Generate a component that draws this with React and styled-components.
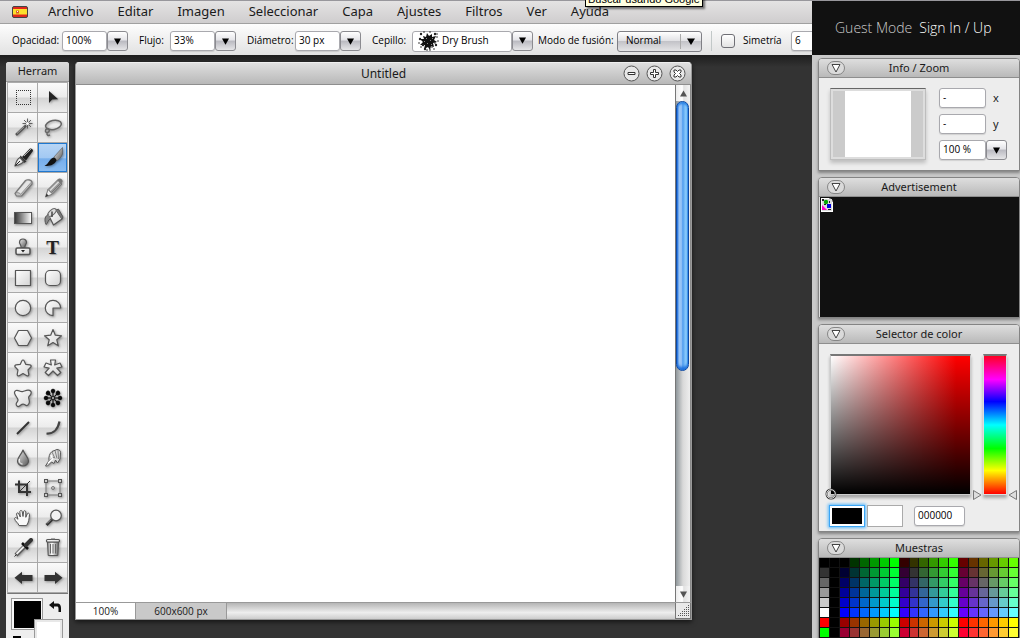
import React, { useState } from 'react';
import styled, { createGlobalStyle } from 'styled-components';

const GlobalStyle = createGlobalStyle`
    * { box-sizing: border-box; }
    body {
        margin: 0;
        background: #333;
        color: #1a1a1a;
        font-family: 'Noto Sans', 'Open Sans', sans-serif;
        font-size: 13px;
        overflow: hidden;
    }
    button, input, select { font: inherit; color: inherit; }
`

const AppStyle = styled.div`
    display: flex;
    height: 100vh;
`
const Main = styled.div`
    flex: 1;
    min-width: 0;
    display: flex;
    flex-direction: column;
`
const MenuBar = styled.nav`
    display: flex;
    align-items: center;
    flex: none;
    height: 24px;
    padding-left: 12px;
    gap: 24px;
    border-top: 1px solid #98979c;
    border-bottom: 1px solid #a0a0a0;
    background: linear-gradient(#e4e3e3, #cfcdce);
    svg { margin-right: -4px; }
`
const MenuItem = styled.a`
    padding-bottom: 2px;
    color: #1a1a1a;
    text-decoration: none;
    white-space: nowrap;
    line-height: 20px;
`
const Tooltip = styled.div`
    position: absolute;
    top: -11px;
    left: 585px;
    height: 18px;
    padding: 0 2px;
    border: 1px solid #000;
    background: #ffffe1;
    box-shadow: 2px 2px 2px rgba(0,0,0,.5);
    font: 11px/18px 'Liberation Sans', sans-serif;
    color: #000;
    white-space: nowrap;
    z-index: 2;
`
const OptionsBar = styled.div`
    display: flex;
    align-items: center;
    flex: none;
    height: 31px;
    padding: 3px 0 0 12px;
    overflow: hidden;
    background: linear-gradient(#fdfdfd, #e2e2e2);
    font-family: 'Open Sans', sans-serif;
    font-size: 10px;
    color: #000;
`
const OptionLabel = styled.label`
    flex: none;
    width: ${p => p.$w}px;
    line-height: 16px;
    margin-bottom: 3px;
    white-space: nowrap;
`
const Combo = styled.div`
    display: flex;
    flex: none;
    margin-right: ${p => p.$gap || 0}px;
`
const TextBox = styled.input`
    flex: none;
    width: ${p => p.$w || 45}px;
    height: 20px;
    padding: 0 3px 2px;
    border: 1px solid #a9a9ae;
    border-radius: 3px;
    background: #fff;
    font-family: 'Open Sans', sans-serif;
    font-size: 10px;
    color: #000;
    box-shadow: 0 1px 1px rgba(0,0,0,.12);
    outline: none;
`
const BrushBox = styled.div`
    display: flex;
    align-items: center;
    width: 100px;
    height: 21px;
    padding-left: 5px;
    gap: 3px;
    border: 1px solid #a9a9ae;
    border-radius: 3px;
    background: #fff;
    input {
        width: 62px;
        padding: 0 0 2px;
        border: 0;
        outline: none;
        background: none;
    }
`
const DropButton = styled.button`
    display: flex;
    align-items: center;
    justify-content: center;
    flex: none;
    width: 21px;
    height: 20px;
    padding: 0;
    border: 1px solid #8b8b90;
    border-radius: 3px;
    background: linear-gradient(#fff 0, #e4e4e8 45%, #b9b9c0 50%, #e6e6e8 100%);
`
const SelectWrap = styled.div`
    position: relative;
    flex: none;
    width: 85px;
    height: 21px;
    select {
        appearance: none;
        width: 100%;
        height: 100%;
        padding: 0 8px 2px;
        border: 1px solid #7f7f85;
        border-radius: 3px;
        background: linear-gradient(#fff 0, #e2e2e5 45%, #c3c3c8 50%, #e4e4e6 100%);
    }
    svg {
        position: absolute;
        top: 3px;
        right: 4px;
        pointer-events: none;
    }
`
const Separator = styled.div`
    flex: none;
    width: 1px;
    height: 20px;
    margin: 0 9px;
    background: #c2c8c8;
`
const CheckBox = styled.input`
    appearance: none;
    flex: none;
    width: 14px;
    height: 14px;
    margin: 0 8px 0 0;
    border: 1px solid #6f6f75;
    border-radius: 3px;
    background: linear-gradient(#fff, #e3e3e3);
    &:checked { background: #6fa8ec; }
`
const Workspace = styled.main`
    display: flex;
    flex: 1;
    min-height: 0;
    padding: 7px 0 0 6px;
    gap: 6px;
    background: linear-gradient(#1d1d1d, #333 12px);
`

// 工具箱
const Toolbox = styled.section`
    flex: none;
    width: 63px;
    border-radius: 3px 3px 0 0;
    background: #eee;
    overflow: hidden;
    h2 {
        margin: 0;
        height: 20px;
        border-bottom: 1px solid #999;
        background: linear-gradient(#dcdcdc, #bdbdbd);
        font-size: 11px;
        font-weight: 400;
        line-height: 18px;
        text-align: center;
    }
`
const ToolGrid = styled.div`
    display: grid;
    grid-template-columns: 30px 30px;
    margin: 0 1px;
    border-top: 1px solid #aaa;
    border-left: 1px solid #aaa;
    border-bottom: 1px solid #777;
`
const ToolButton = styled.button`
    display: flex;
    align-items: center;
    justify-content: center;
    height: 30px;
    padding: 0;
    border: 0;
    border-right: 1px solid #a9a9a9;
    border-bottom: 1px solid #a9a9a9;
    background: ${p => p.$active
        ? 'linear-gradient(#b9d6f5 0, #a3c9f3 50%, #77aeeb 55%, #8bbcf0 100%)'
        : 'linear-gradient(#fafafa 0, #ececec 48%, #d4d4d4 52%, #ededed 100%)'};
    box-shadow: ${p => p.$active ? '0 0 0 1px #1f78d0 inset' : 'none'};
    svg {
        display: block;
        filter: ${p => p.$flat ? 'none' : 'drop-shadow(1px 1px 1px rgba(0,0,0,.35))'};
    }
`
const TypeGlyph = styled.span`
    font: bold 19px/28px 'Liberation Serif', serif;
    color: #222;
    text-shadow: 1px 1px 1px rgba(0,0,0,.3);
`
const ToolColors = styled.div`
    display: grid;
    grid-template-columns: 32px 19px;
    padding: 4px 5px;
`
const FrontColor = styled.button`
    width: 32px;
    height: 32px;
    padding: 0;
    border: 2px solid #f8f8f8;
    border-left-width: 3px;
    border-top-width: 3px;
    outline: 1px solid #999;
    outline-offset: -1px;
    background: #000;
    display: flex;
    align-items: flex-end;
    justify-content: flex-end;
`
const BackColor = styled.div`
    width: 27px;
    height: 28px;
    margin-left: -8px;
    border: 2px solid #e8e8e8;
    outline: 1px solid #999;
    background: #fff;
`
const ColorSide = styled.div`
    svg { display: block; margin: 3px 0 7px 6px; }
`
const TinyReset = styled.div`
    width: 8px;
    height: 6px;
    margin: 6px 0 0 2px;
    background: #000;
`

// 文件視窗
const DocWindow = styled.section`
    display: flex;
    flex-direction: column;
    flex: none;
    width: 617px;
    margin-bottom: 18px;
    border: 1px solid #999;
    border-top-color: #eee;
    border-radius: 4px 4px 0 0;
    background: #fff;
    box-shadow: 0 2px 5px rgba(0,0,0,.6);
`
const TitleBar = styled.header`
    display: grid;
    grid-template-columns: 1fr auto 1fr;
    align-items: center;
    flex: none;
    height: 22px;
    padding: 0 5px;
    border-bottom: 1px solid #8e8e8e;
    border-radius: 3px 3px 0 0;
    background: linear-gradient(#dfdfdf, #b8b8b8);
    h1 {
        grid-column: 2;
        margin: 0;
        font-size: 12px;
        font-weight: 400;
        line-height: 20px;
    }
    div {
        display: flex;
        justify-content: flex-end;
        gap: 6px;
    }
`
const RoundButton = styled.button`
    width: 17px;
    height: 17px;
    padding: 0;
    border: 0;
    background: none;
    svg { display: block; }
`
const DocBody = styled.div`
    display: flex;
    flex: 1;
    min-height: 0;
`
const Paper = styled.div`
    flex: 1;
    background: #fff;
`
const ScrollBar = styled.div`
    display: flex;
    flex-direction: column;
    width: 16px;
    border-left: 1px solid #777;
    border-right: 1px solid #888;
    background: linear-gradient(90deg, #8f979b, #d9d9d9 50%, #eee);
`
const ScrollArrow = styled.button`
    display: flex;
    align-items: center;
    justify-content: center;
    flex: none;
    height: 16px;
    padding: 0;
    border: 0;
    background: linear-gradient(90deg, #ececec, #fff 45%, #e2e2e2 55%, #f3f3f3);
`
const ScrollTrack = styled.div`
    flex: 1;
    min-height: 0;
`
const ScrollThumb = styled.div`
    width: 13px;
    height: 270px;
    max-height: 100%;
    border: 1px solid #0b49a6;
    border-radius: 7px;
    background: linear-gradient(90deg, #1b63d8 0, #a4cdf8 18%, #8bbcf5 45%, #4d9bef 52%, #9bd8ff 85%, #4aa2ef 100%);
    box-shadow: 0 2px 2px #2f86e6 inset, 0 -3px 3px #1c6fdc inset;
`
const StatusBar = styled.footer`
    display: flex;
    flex: none;
    height: 17px;
    border-top: 1px solid #999;
    background: linear-gradient(#b5b5b5, #eee 60%, #ccc);
    font-family: 'Open Sans', sans-serif;
    font-size: 10px;
    line-height: 17px;
    text-align: center;
`
const StatusCell = styled.div`
    width: ${p => p.$w}px;
    border-right: 1px solid #999;
    background: ${p => p.$plain ? '#fff' : '#c9c9c9'};
`
const Grip = styled.div`
    margin-left: auto;
    width: 16px;
    border: 1px solid #777;
    border-top: 0;
    background: #e9e9e9;
    svg { display: block; }
`

// 右側面板
const Sidebar = styled.aside`
    display: flex;
    flex-direction: column;
    flex: none;
    width: 208px;
    background: #c9c9c9;
`
const Account = styled.div`
    display: flex;
    align-items: center;
    flex: none;
    height: 55px;
    padding: 0 0 2px 23px;
    gap: 7px;
    border-top: 1px solid #98979c;
    background: #111;
    color: #ccc;
    font-family: 'Open Sans', sans-serif;
    font-size: 14px;
    font-weight: 300;
    white-space: nowrap;
    a { color: #fff; text-decoration: none; }
`
const Panels = styled.div`
    display: flex;
    flex-direction: column;
    flex: 1;
    min-height: 0;
    gap: 6px;
    padding: 3px 0 0 6px;
    overflow: hidden;
`
const PanelStyle = styled.section`
    flex: none;
    border: 1px solid #848484;
    border-radius: 4px 4px 0 0;
    background: #ededed;
    box-shadow: 0 2px 3px rgba(0,0,0,.35);
`
const PanelHead = styled.header`
    display: grid;
    grid-template-columns: 1fr auto 1fr;
    align-items: center;
    height: 19px;
    padding: 0 8px;
    border-bottom: 1px solid #8e8e8e;
    border-radius: 3px 3px 0 0;
    background: linear-gradient(#dedede, #b9b9b9);
    h2 {
        margin: 0;
        font-size: 11px;
        font-weight: 400;
        line-height: 18px;
    }
`
const Collapse = styled.button`
    width: 18px;
    height: 14px;
    padding: 0;
    border: 1px solid #858585;
    border-radius: 7px;
    background: #dadada;
    display: flex;
    align-items: center;
    justify-content: center;
`
const InfoBody = styled.div`
    display: flex;
    gap: 13px;
    padding: 10px 0 10px 11px;
`
const Thumb = styled.div`
    width: 96px;
    height: 72px;
    padding: 2px;
    border: 1px solid #bdbdbd;
    border-top-color: #666;
    background: #ddd;
    box-shadow: 0 3px 4px rgba(0,0,0,.2);
    div {
        height: 100%;
        border: solid #cbcbcb;
        border-width: 0 12px;
        background: #fff;
    }
`
const InfoFields = styled.div`
    display: flex;
    flex-direction: column;
    gap: 6px;
    font-size: 11px;
    div { display: flex; align-items: center; }
    label { padding-left: 7px; line-height: 16px; }
`
const AdBody = styled.div`
    height: 120px;
    padding: 1px;
    border-left: 1px solid #ddd;
    background: #111;
`
const PickerBody = styled.div`
    padding: 10px 0 5px 11px;
`
const PickerRow = styled.div`
    display: flex;
    align-items: flex-start;
    gap: 12px;
`
const Shade = styled.div`
    position: relative;
    width: 141px;
    height: 141px;
    border: 1px solid #ccc;
    border-top: 2px solid #777;
    background: linear-gradient(transparent, #000), linear-gradient(90deg, #fff, #f00 90%);
    box-shadow: 0 3px 3px rgba(0,0,0,.3);
    svg { position: absolute; left: -6px; bottom: -6px; }
`
const Hue = styled.div`
    position: relative;
    width: 24px;
    height: 141px;
    border: 1px solid #ddd;
    border-top: 2px solid #777;
    background: linear-gradient(#f02 0, #f0f 17%, #00f 33%, #0ff 50%, #0f0 67%, #ff0 83%, #f00 100%);
    box-shadow: 0 3px 3px rgba(0,0,0,.3);
    input {
        display: block;
        width: 100%;
        height: 100%;
        margin: 0;
        opacity: 0;
        writing-mode: vertical-lr;
    }
    svg { position: absolute; left: -12px; bottom: -6px; pointer-events: none; }
`
const ChipRow = styled.div`
    display: flex;
    align-items: center;
    gap: 4px;
    margin-top: 11px;
    input { margin-left: 8px; }
`
const Chip = styled.button`
    width: 34px;
    height: 20px;
    padding: 0;
    border: 2px solid #fff;
    outline: 1px solid ${p => p.$on ? '#3aa5f5' : '#aaa'};
    box-shadow: ${p => p.$on ? '0 0 3px 2px #5bb8fa' : 'none'};
    background: ${p => p.$color};
`
const SwatchGrid = styled.div`
    display: grid;
    grid-template-columns: repeat(20, 1fr);
    grid-auto-rows: 9px;
    gap: 1px;
    padding: 0 1px 1px;
    background: #111;
`
const Swatch = styled.button`
    min-width: 0;
    padding: 0;
    border: 0;
    background: ${p => p.$color};
`

const Triangle = ({ w = 7, h = 7, up }) => (
    <svg width={w} height={h} viewBox="0 0 7 7">
        <path d={up ? 'M0 6.5 3.5 .5 7 6.5z' : 'M0 .5h7L3.5 6.8z'} fill={up === undefined ? '#000' : '#555'} />
    </svg>
)

const s = { fill: 'url(#metal)', stroke: '#555', strokeWidth: 1.2, strokeLinejoin: 'round' }

// 每格工具圖示 (29x29)
const toolIcons = [
    ['Marco', <g fill="none" stroke="#333" strokeDasharray="1 1">
        <path d="M8 7.500h15M8 21.500h15M8.500 7v15M22.500 7v15" />
    </g>],
    ['Mover', <path d="M11 8v12l3.2-3.4 6-.3z" fill="#222" />],
    ['Varita', <g fill="none" stroke="#555">
        <path d="M8 22 18 12.500" stroke="#555" strokeWidth="2.600" />
        <path d="M9 20.500 17 12.800" stroke="#bbb" strokeWidth=".8" />
        <path d="M19.500 5.500v10M14.500 10.500h10M16 7l7 7M23 7l-7 7" strokeWidth=".9" />
        <circle cx="19.500" cy="10.500" r="1.500" fill="#fff" stroke="none" />
    </g>],
    ['Lazo', <g fill="none" stroke="#666" strokeWidth="1.500">
        <ellipse cx="15.500" cy="12" rx="8" ry="4.500" transform="rotate(-12 15.5 12)" />
        <path d="M9.500 15.500c-3 1-2.500 4.500 0 4s2.500-4-.5-4M9 19.500c-.5 2.500 1 3.500 3 2.500" />
    </g>],
    ['Pluma', <g>
        <path d="M14 14 22 5.500c1.500-.5 3 .7 3 2.500L18 17.500z" fill="#222" />
        <path d="m16 13 7-7" stroke="#aaa" />
        <path d="m12.500 12.500 6 6-2.500 1.500-4.500-5z" fill="#333" />
        <path d="M7 23c1-4 2-7 5-8.500l3.500 4C14 21 11 22 7 23z" {...s} />
        <path d="m7.500 22.500 4.500-4.500" stroke="#222" />
    </g>],
    ['Pincel', <g>
        <path d="M16 14 24.500 4.500v6.500c-1 3-3.500 5.500-6 7z" fill="url(#dark)" stroke="#555" strokeWidth=".6" />
        <path d="M15.500 14.500c2 .5 3 1.500 3 3-2 4.500-7 6-12 5.200 4-1 4.500-6.700 9-8.200z" fill="#111" />
    </g>],
    ['Borrador', <g>
        <path d="M7 20.500 17.500 7.500c2-1.500 6-.5 6.500 1.500v2L13.500 23H8.500z" {...s} fill="#c4c4c4" stroke="#777" />
        <path d="M9 19.500 18.500 8.500c1.500-.8 3.500-.3 4.500.8L13 20.500c-1-1.200-2.500-1.500-4-1z" fill="#e4e4e4" />
        <path d="M7.500 20.500c1-1.500 4-1 5 1L23.500 9" fill="none" stroke="#888" strokeWidth=".8" />
    </g>],
    ['Lápiz', <g>
        <path d="m10 16.500 9.500-9.500 4.500 4-9.500 10z" fill="#999" stroke="#777" />
        <path d="m12 17.500 9-9" stroke="#ddd" strokeWidth="1.500" /><path d="M13.500 19.500l9-9" stroke="#777" />
        <path d="m19 7 2-1.500c2-.5 4 1.500 3.500 3L23 11z" fill="#777" />
        <path d="m10 16.500 4.500 4.500L7.500 24z" fill="#eee" stroke="#777" /><path d="m8.500 20.500 2 2-3 1.500z" fill="#333" />
    </g>],
    ['Degradado', <rect x="6.500" y="9.500" width="17" height="11" fill="url(#grad)" stroke="#555" />],
    ['Bote', <g>
        <path d="M11 13 18 7l6 9-8.500 6z" {...s} />
        <path d="m18 7 2.500-.8L25 14l-1 2" fill="#777" stroke="#555" />
        <ellipse cx="14" cy="9.500" rx="5" ry="2.500" fill="#ddd" stroke="#666" transform="rotate(-42 14 9.5)" />
        <path d="M14 8.500v5.500" stroke="#444" strokeWidth="1.500" />
        <path d="M10.500 11.500C7 13 6 16 8 21.500c2-.5 1.500-4.500 4.500-6" fill="#888" stroke="#555" />
    </g>],
    ['Tampón', <g>
        <path d="M13 14.500c.8-2-1.500-3.300-1.500-5a3.500 3.500 0 0 1 7 0c0 1.700-2.300 3-1.500 5z" {...s} fill="url(#dark)" />
        <rect x="8" y="15" width="14" height="6.500" rx="1.500" {...s} strokeWidth="1.600" />
        <path d="M13 17h4l-2 2.500z" fill="#222" />
    </g>],
    ['Texto', null],
    ['Rectángulo', <rect x="7.500" y="7.500" width="15" height="15" {...s} />],
    ['Redondeado', <rect x="7.500" y="7.500" width="15" height="15" rx="4.500" {...s} />],
    ['Elipse', <circle cx="15" cy="15" r="7.700" {...s} />],
    ['Sector', <path d="M15 15h7.700A7.700 7.700 0 1 0 15 22.700z" {...s} />],
    ['Polígono', <path d="m10.500 7.500h9L23.500 15l-4 7.500h-9L6.500 15z" {...s} />],
    ['Estrella', <path d="m15 6.500 2.300 5.700 6.200.6-4.700 4 1.500 6-5.300-3.300L9.700 22.800l1.500-6-4.700-4 6.200-.6z" {...s} />],
    ['Estrella redonda', <path d="M13.800 8c.6-1.300 1.800-1.300 2.400 0l1.500 3.300 4.200.5c1.300.3 1.700 1.500.7 2.400L20 17l.8 4.300c.1 1.300-.9 2-2 1.400L15 20.500l-3.800 2.200c-1.100.6-2.100-.1-2-1.400L10 17l-2.600-2.800c-1-.9-.6-2.100.7-2.400l4.200-.5z" {...s} />],
    ['Asterisco', <path d="M12.500 7h5l-.8 5 5.300-2 2 4-5.200 1.200 4 4.300-3.300 3L15 18l-4.500 4.500-3.300-3 4-4.300L6 14l2-4 5.300 2z" {...s} />],
    ['Forma', <path d="M8 7.500c3-.8 4 2 7 1s5.500-2.500 7.500-.5 0 4-1.500 5.500 1.500 4 0 7-2.500 2.500-4.500 1-3 0-5 1.500-4-1-3-3 2.500-2 1-4.500S4.500 9 8 7.500z" {...s} />],
    ['Flor', <g fill="#0a0a0a" stroke="#0a0a0a">
        {[0, 45, 90, 135, 180, 225, 270, 315].map(a => <g key={a} transform={`rotate(${a} 15 15)`}>
            <circle cx="15" cy="8" r="1.800" /><path d="M15 9v4" strokeWidth="1.200" /></g>)}
        <circle cx="15" cy="15" r="1.500" fill="#ddd" strokeWidth="1.200" />
    </g>],
    ['Línea', <path d="m9 21 12-12" stroke="#333" strokeWidth="2" />],
    ['Curva', <path d="M8.500 20.500c5 .5 11-2 13-12" fill="none" stroke="#444" strokeWidth="2.200" />],
    ['Desenfocar', <g><path d="M15 7c1.500 4.500 5.500 7 5.500 11a5.500 5 0 0 1-11 0C9.500 14 13.500 11.500 15 7z" {...s} fill="url(#dark)" />
        <path d="M11.500 16c-1 3 1 5 3 5" stroke="#fff" fill="none" /></g>],
    ['Dedo', <g>
        <path d="M7.500 23 11 17.500c-.5-3.500.5-7 3-9l5-2c2 0 3.500 1 3.500 3l-.5 6.500-2.500 4-2-3-1.500 3.500-2.500-1.500-4 4z" {...s} strokeWidth="1" fill="#ddd" />
        <path d="m14 9 3 6.500M17 7.500l2 8M20 7l.5 9M11 18l5-4" stroke="#777" strokeWidth=".9" fill="none" />
        <path d="m13 12 1.500 4-4.500 4" stroke="#fff" strokeWidth="1.200" fill="none" />
    </g>],
    ['Recortar', <g fill="none" stroke="#333" strokeWidth="2">
        <path d="M11 7.500v11.500h12M7 11.500h12v11.500" /><path d="m12 18 10-10" strokeWidth="1" /></g>],
    ['Transformar', <g fill="none" stroke="#777"><rect x="8" y="8" width="14" height="14" />
        <circle cx="15" cy="15" r="1.500" />
        {[[6.5, 6.5], [20.5, 6.5], [6.5, 20.5], [20.5, 20.5]].map(([x, y]) =>
            <rect key={x + '-' + y} x={x} y={y} width="3" height="3" fill="#ccc" stroke="#555" />)}</g>],
    ['Mano', <path d="M11 22.500c-.5-2.500-4-4-4.500-7 .5-1.500 2-1 3.500.8L8.500 11c.3-1.500 1.800-1.500 2.300 0l1.500 3-.5-5.500c.5-1.500 2-1.300 2.400 0l.8 5 .6-5c.6-1.300 2-1 2.200.5l0 5.300 1.500-3.500c1-1.200 2.200-.5 2.200.8-.5 4-.5 7.500-3 11z" {...s} strokeWidth="1" fill="#f8f8f8" />],
    ['Lupa', <g><path d="m8.500 22 6-6" stroke="#333" strokeWidth="3" /><path d="m9 20.500 4-4" stroke="#aaa" />
        <circle cx="18" cy="12.500" r="5.300" {...s} fill="#f2f2f2" /></g>],
    ['Cuentagotas', <g><path d="m8 22 9-9" stroke="#555" strokeWidth="4" /><path d="m8.500 21 8-8" stroke="#eee" strokeWidth="1.800" />
        <path d="m14 10 6 6" stroke="#111" strokeWidth="2.500" /><path d="m18 12 5-5" stroke="#333" strokeWidth="4" strokeLinecap="round" />
        <path d="m6.500 23.500 2-2" stroke="#333" /></g>],
    ['Papelera', <g><path d="M9.500 9h11l-.7 13.500h-9.600z" fill="url(#grad2)" stroke="#555" />
        <rect x="8.500" y="6.500" width="13" height="2.500" rx="1" {...s} /><path d="M13 6h4M12.500 11v9.500M15 11v9.500M17.500 11v9.500" stroke="#666" /></g>],
    ['Deshacer', <path d="M6.500 14.700 14 8.700v3.300h10.500v6H14v3z" fill="#333" />],
    ['Rehacer', <path d="M24.500 14.700 17 8.700v3.300H6.500v6H17v3z" fill="#333" />],
]

const hex = ['00', '33', '66', '99', 'cc', 'ff']
const firstColumn = ['#000', '#333', '#666', '#999', '#ccc', '#fff', '#f00', '#0f0']
const swatches = []
for (let row = 0; row < 8; row++) {
    swatches.push(firstColumn[row], '#000')
    for (let col = 0; col < 18; col++) {
        const r = Math.floor(col / 6) + (row > 5 ? 3 : 0)
        swatches.push('#' + hex[r] + hex[col % 6] + hex[row % 6])
    }
}

const Flag = () => (
    <svg width="16" height="12" viewBox="0 0 16 12">
        <rect x=".5" y=".5" width="15" height="11" rx="1.500" fill="#e0281c" stroke="#444" />
        <rect x="1" y="3" width="14" height="5.500" fill="#fbe12b" />
        <path d="M4 4.500h3v3H4z" fill="#d9602a" /><path d="M5 5h1v1H5z" fill="#fff" />
    </svg>
)

const Splat = () => (
    <svg width="21" height="20" viewBox="0 0 21 20">
        <path d="M5 5l3 1 1-4 2 3 3-2 0 3 4-1-2 4 3 2-4 1 1 4-3-1-1 4-2-3-4 2 1-4-5 0 3-3-3-3 4 0z" fill="#111" />
        {[[3, 3], [6, 1], [12, 1], [17, 3], [19, 6], [20, 10], [18, 14], [16, 18], [12, 19], [7, 18], [3, 16], [1, 12], [2, 8], [14, 16], [17, 12], [5, 14], [9, 19], [19, 3]].map(([x, y], i) =>
            <circle key={i} cx={x} cy={y} r={i % 3 ? 0.8 : 1.2} fill="#222" />)}
        {[[8, 7], [12, 9], [9, 12], [14, 7], [13, 13], [6, 10]].map(([x, y], i) =>
            <path key={i} d={`M${x} ${y}l1 1`} stroke="#aaa" strokeWidth=".8" />)}
    </svg>
)

const Option = ({ id, label, w, value, gap }) => (
    <>
        <OptionLabel $w={w} htmlFor={id}>{label}</OptionLabel>
        <Combo $gap={gap}>
            <TextBox id={id} defaultValue={value} />
            <DropButton aria-label={label}><Triangle /></DropButton>
        </Combo>
    </>
)

const Panel = ({ title, children }) => (
    <PanelStyle>
        <PanelHead>
            <Collapse aria-label={title}>
                <svg width="10" height="10" viewBox="0 0 10 10"><path d="M1 1.500h8L5 9z" fill="#fff" stroke="#444" /></svg>
            </Collapse>
            <h2>{title}</h2>
        </PanelHead>
        {children}
    </PanelStyle>
)

const App = () => {
    const [tool, setTool] = useState(5)
    const menus = ['Archivo', 'Editar', 'Imagen', 'Seleccionar', 'Capa', 'Ajustes', 'Filtros', 'Ver', 'Ayuda']

    return (
        <AppStyle>
            <GlobalStyle />
            <Main>
                <MenuBar>
                    <Flag />
                    {menus.map(m => <MenuItem key={m} href="#">{m}</MenuItem>)}
                </MenuBar>
                <Tooltip>Buscar usando Google</Tooltip>
                <OptionsBar>
                    <Option id="opacity" label="Opacidad:" w={50} value="100%" gap={11} />
                    <Option id="flow" label="Flujo:" w={31} value="33%" gap={11} />
                    <Option id="diameter" label="Diámetro:" w={48} value="30 px" gap={11} />
                    <OptionLabel $w={40} htmlFor="brush">Cepillo:</OptionLabel>
                    <Combo $gap={5}>
                        <BrushBox><Splat /><input id="brush" defaultValue="Dry Brush" /></BrushBox>
                        <DropButton aria-label="Cepillo"><Triangle /></DropButton>
                    </Combo>
                    <OptionLabel $w={79} htmlFor="blend">Modo de fusión:</OptionLabel>
                    <SelectWrap>
                        <select id="blend"><option>Normal</option></select>
                        <svg width="18" height="15" viewBox="0 0 18 15">
                            <path d="M.5 0v15" stroke="#aaa" /><path d="M7 4.500h8L11 11z" />
                        </svg>
                    </SelectWrap>
                    <Separator />
                    <CheckBox type="checkbox" id="symmetry" />
                    <OptionLabel $w={48} htmlFor="symmetry">Simetría</OptionLabel>
                    <TextBox aria-label="Simetría" defaultValue="6" />
                </OptionsBar>
                <Workspace>
                    <Toolbox>
                        <h2>Herram</h2>
                        <ToolGrid>
                            {toolIcons.map(([name, icon], i) => (
                                <ToolButton key={name} aria-label={name} $active={tool === i} $flat={i === 0} onClick={() => setTool(i)}>
                                    {icon
                                        ? <svg width="29" height="29" viewBox="0 0 29 29">{icon}</svg>
                                        : <TypeGlyph>T</TypeGlyph>}
                                </ToolButton>
                            ))}
                        </ToolGrid>
                        <ToolColors>
                            <div>
                                <FrontColor aria-label="Color">
                                    <svg width="7" height="5" viewBox="0 0 7 5"><path d="M0 0h7v5H0z" fill="#eee" /><path d="M1.500 1h4l-2 3z" /></svg>
                                </FrontColor>
                                <TinyReset />
                            </div>
                            <ColorSide>
                                <svg width="13" height="12" viewBox="0 0 13 12">
                                    <defs>
                                        <linearGradient id="metal" x2="1" y2="1"><stop stopColor="#fff" /><stop offset="1" stopColor="#d4d4d4" /></linearGradient>
                                        <linearGradient id="dark" x2="1" y2="1"><stop stopColor="#eee" /><stop offset="1" stopColor="#555" /></linearGradient>
                                        <linearGradient id="grad"><stop stopColor="#333" /><stop offset="1" stopColor="#fff" /></linearGradient>
                                        <linearGradient id="grad2"><stop stopColor="#888" /><stop offset=".4" stopColor="#fff" /><stop offset="1" stopColor="#666" /></linearGradient>
                                    </defs>
                                    <path d="M5 0v2.500h3c3 0 4 2 4 4.500v4H9.500V8c0-2-.5-2.500-2-2.500H5V8L0 4z" fill="#111" />
                                </svg>
                                <BackColor />
                            </ColorSide>
                        </ToolColors>
                    </Toolbox>
                    <DocWindow>
                        <TitleBar>
                            <h1>Untitled</h1>
                            <div>
                                {['M5 7.500h7v2H5z', 'M7.500 4.500h2v3h3v2h-3v3h-2v-3h-3v-2h3z', 'M5 5h2l1.500 1.500L10 5h2v2l-1.500 1.500L12 10v2h-2l-1.500-1.500L7 12H5v-2l1.500-1.500L5 7z'].map(d => (
                                    <RoundButton key={d} aria-label="Ventana">
                                        <svg width="17" height="17" viewBox="0 0 17 17">
                                            <circle cx="8.500" cy="8.500" r="7.500" fill="#e8e8e8" stroke="#555" />
                                            <path d={d} fill="#fff" stroke="#333" />
                                        </svg>
                                    </RoundButton>
                                ))}
                            </div>
                        </TitleBar>
                        <DocBody>
                            <Paper />
                            <ScrollBar>
                                <ScrollArrow aria-label="Arriba"><Triangle up={true} /></ScrollArrow>
                                <ScrollTrack><ScrollThumb /></ScrollTrack>
                                <ScrollArrow aria-label="Abajo"><Triangle up={false} /></ScrollArrow>
                            </ScrollBar>
                        </DocBody>
                        <StatusBar>
                            <StatusCell $w={60} $plain>100%</StatusCell>
                            <StatusCell $w={91}>600x600 px</StatusCell>
                            <Grip>
                                <svg width="14" height="15" viewBox="0 0 14 15">
                                    <path d="M12 2.500h1M10 4.500h3M8 6.500h5M6 8.500h7M4 10.500h9M2 12.500h11" stroke="#555" strokeDasharray="1 1" />
                                </svg>
                            </Grip>
                        </StatusBar>
                    </DocWindow>
                </Workspace>
            </Main>
            <Sidebar>
                <Account><span>Guest Mode</span><a href="#">Sign In / Up</a></Account>
                <Panels>
                    <Panel title="Info / Zoom">
                        <InfoBody>
                            <Thumb><div /></Thumb>
                            <InfoFields>
                                <div><TextBox id="px" $w={47} defaultValue="-" /><label htmlFor="px">x</label></div>
                                <div><TextBox id="py" $w={47} defaultValue="-" /><label htmlFor="py">y</label></div>
                                <div><TextBox aria-label="Zoom" $w={47} defaultValue="100 %" /><DropButton aria-label="Zoom"><Triangle /></DropButton></div>
                            </InfoFields>
                        </InfoBody>
                    </Panel>
                    <Panel title="Advertisement">
                        <AdBody>
                            <svg width="12" height="14" viewBox="0 0 12 14">
                                <path d="M0 0h9l3 3v11H0z" fill="#fff" /><path d="M9 0v3h3" fill="none" stroke="#333" />
                                <path d="M1 1h10v12H1z" fill="#ddd" />
                                <circle cx="5" cy="4" r="2.200" fill="#0a0" /><path d="M6 6h4v4H6z" fill="#00d" /><path d="M1 7l5 5H1z" fill="#f0c" />
                                <path d="M1 1h2v2H1zM7 11h3v1H7zM3 6h2v1H3zM8 3h1v2H8z" fill="#222" />
                            </svg>
                        </AdBody>
                    </Panel>
                    <Panel title="Selector de color">
                        <PickerBody>
                            <PickerRow>
                                <Shade>
                                    <svg width="12" height="12" viewBox="0 0 12 12">
                                        <circle cx="6" cy="6" r="4.500" fill="none" stroke="#333" strokeWidth="2" />
                                        <circle cx="6" cy="6" r="4.300" fill="none" stroke="#ddd" />
                                    </svg>
                                </Shade>
                                <Hue>
                                    <input type="range" min="0" max="360" defaultValue="0" aria-label="Tono" />
                                    <svg width="46" height="10" viewBox="0 0 46 10" fill="#ddd" stroke="#777">
                                        <path d="M1.500.500 9 5l-7.500 4.500zM44.500.500 37 5l7.500 4.500z" />
                                    </svg>
                                </Hue>
                            </PickerRow>
                            <ChipRow>
                                <Chip $on $color="#000" aria-label="000000" />
                                <Chip $color="#fff" aria-label="ffffff" />
                                <TextBox $w={51} aria-label="Color" defaultValue="000000" />
                            </ChipRow>
                        </PickerBody>
                    </Panel>
                    <Panel title="Muestras">
                        <SwatchGrid>
                            {swatches.map((c, i) => <Swatch key={i} $color={c} aria-label={c} />)}
                        </SwatchGrid>
                    </Panel>
                </Panels>
            </Sidebar>
        </AppStyle>
    )
}

export default App
